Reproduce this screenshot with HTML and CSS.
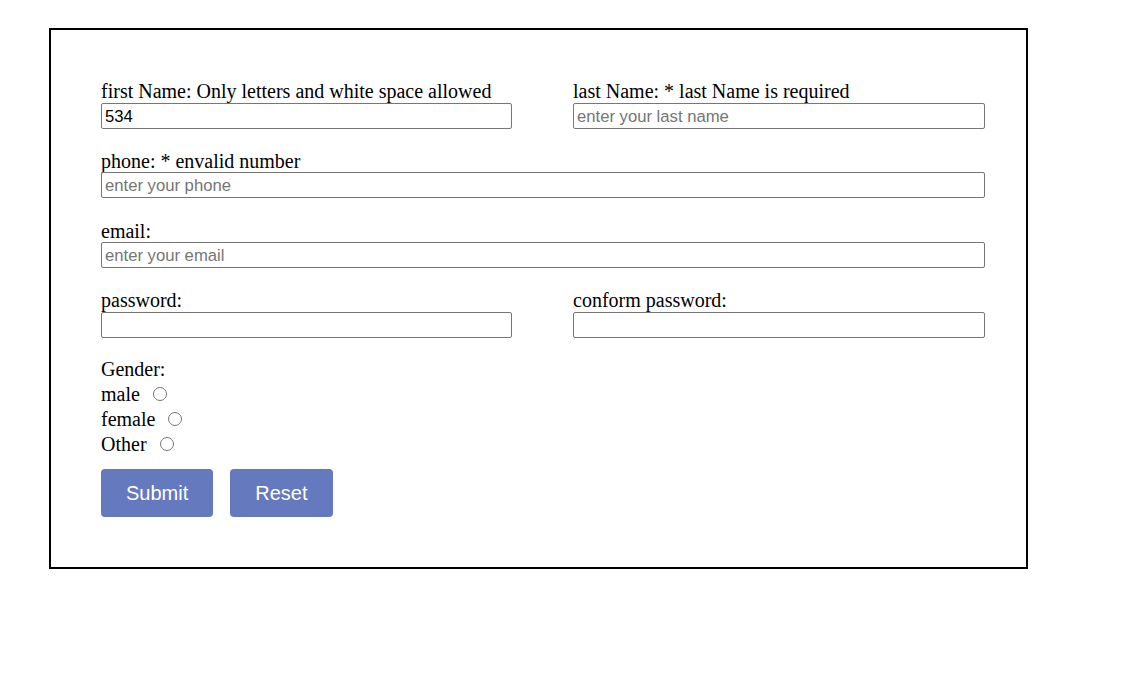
FILE: index.html
```html
<!DOCTYPE html>
<html>
<head>
<meta charset="utf-8">
<link rel="stylesheet" href="styles.css">
</head>
<body>
<form class="card">
  <div class="row two">
    <div class="field">
      <label class="lbl">first Name: <span class="err">Only letters and white space allowed</span></label>
      <input class="inp" type="text" value="534">
    </div>
    <div class="field">
      <label class="lbl">last Name: <span class="err">* last Name is required</span></label>
      <input class="inp" type="text" placeholder="enter your last name">
    </div>
  </div>
  <div class="row">
    <div class="field">
      <label class="lbl">phone: <span class="err">* envalid number</span></label>
      <input class="inp" type="text" placeholder="enter your phone">
    </div>
  </div>
  <div class="row">
    <div class="field">
      <label class="lbl">email:</label>
      <input class="inp" type="text" placeholder="enter your email">
    </div>
  </div>
  <div class="row two">
    <div class="field">
      <label class="lbl">password:</label>
      <input class="inp" type="password">
    </div>
    <div class="field">
      <label class="lbl">conform password:</label>
      <input class="inp" type="password">
    </div>
  </div>
  <div class="gender">
    <div class="gline">Gender:</div>
    <div class="gline">male <input class="radio" type="radio" name="g"></div>
    <div class="gline">female <input class="radio" type="radio" name="g"></div>
    <div class="gline">Other <input class="radio" type="radio" name="g"></div>
  </div>
  <div class="actions">
    <button class="btn" type="button">Submit</button>
    <button class="btn" type="button">Reset</button>
  </div>
</form>
</body>
</html>
```
FILE: styles.css
```css
html, body {
  margin: 0;
  padding: 0;
  background: #fff;
}
body {
  font-family: "Liberation Serif", "Times New Roman", serif;
  font-size: 20px;
  color: #000;
}
.card {
  box-sizing: border-box;
  width: 979px;
  margin: 28px 0 0 49px;
  border: 2px solid #000;
  padding: 51px 41px 50px 50px;
}
.row {
  margin-bottom: 22.33px;
}
.row.two {
  display: grid;
  grid-template-columns: 411px 412px;
  column-gap: 61px;
}
.field {
  display: flex;
  flex-direction: column;
}
.lbl {
  line-height: 20px;
  white-space: nowrap;
}
.inp {
  box-sizing: border-box;
  width: 100%;
  height: 26px;
  margin: 1.5px 0 0 0;
  padding: 2px 3px 0 3px;
  border: 1px solid #767676;
  border-radius: 2px;
  font-family: "Liberation Sans", Arial, sans-serif;
  font-size: 16.67px;
  color: #000;
  background: #fff;
}
.inp::placeholder {
  color: #757575;
}
.gender {
  margin-top: -3.7px;
}
.gline {
  height: 25px;
  line-height: 25px;
  display: flex;
  align-items: flex-start;
  white-space: pre;
}
.radio {
  width: 14px;
  height: 14px;
  margin: 5px 0 0 8px;
}
.actions {
  display: flex;
  gap: 17px;
  margin-top: 12.5px;
}
.btn {
  height: 48px;
  padding: 0 25px;
  border: none;
  border-radius: 4px;
  background: #6579be;
  color: #fff;
  font-family: "Liberation Sans", Arial, sans-serif;
  font-size: 20px;
}
```
